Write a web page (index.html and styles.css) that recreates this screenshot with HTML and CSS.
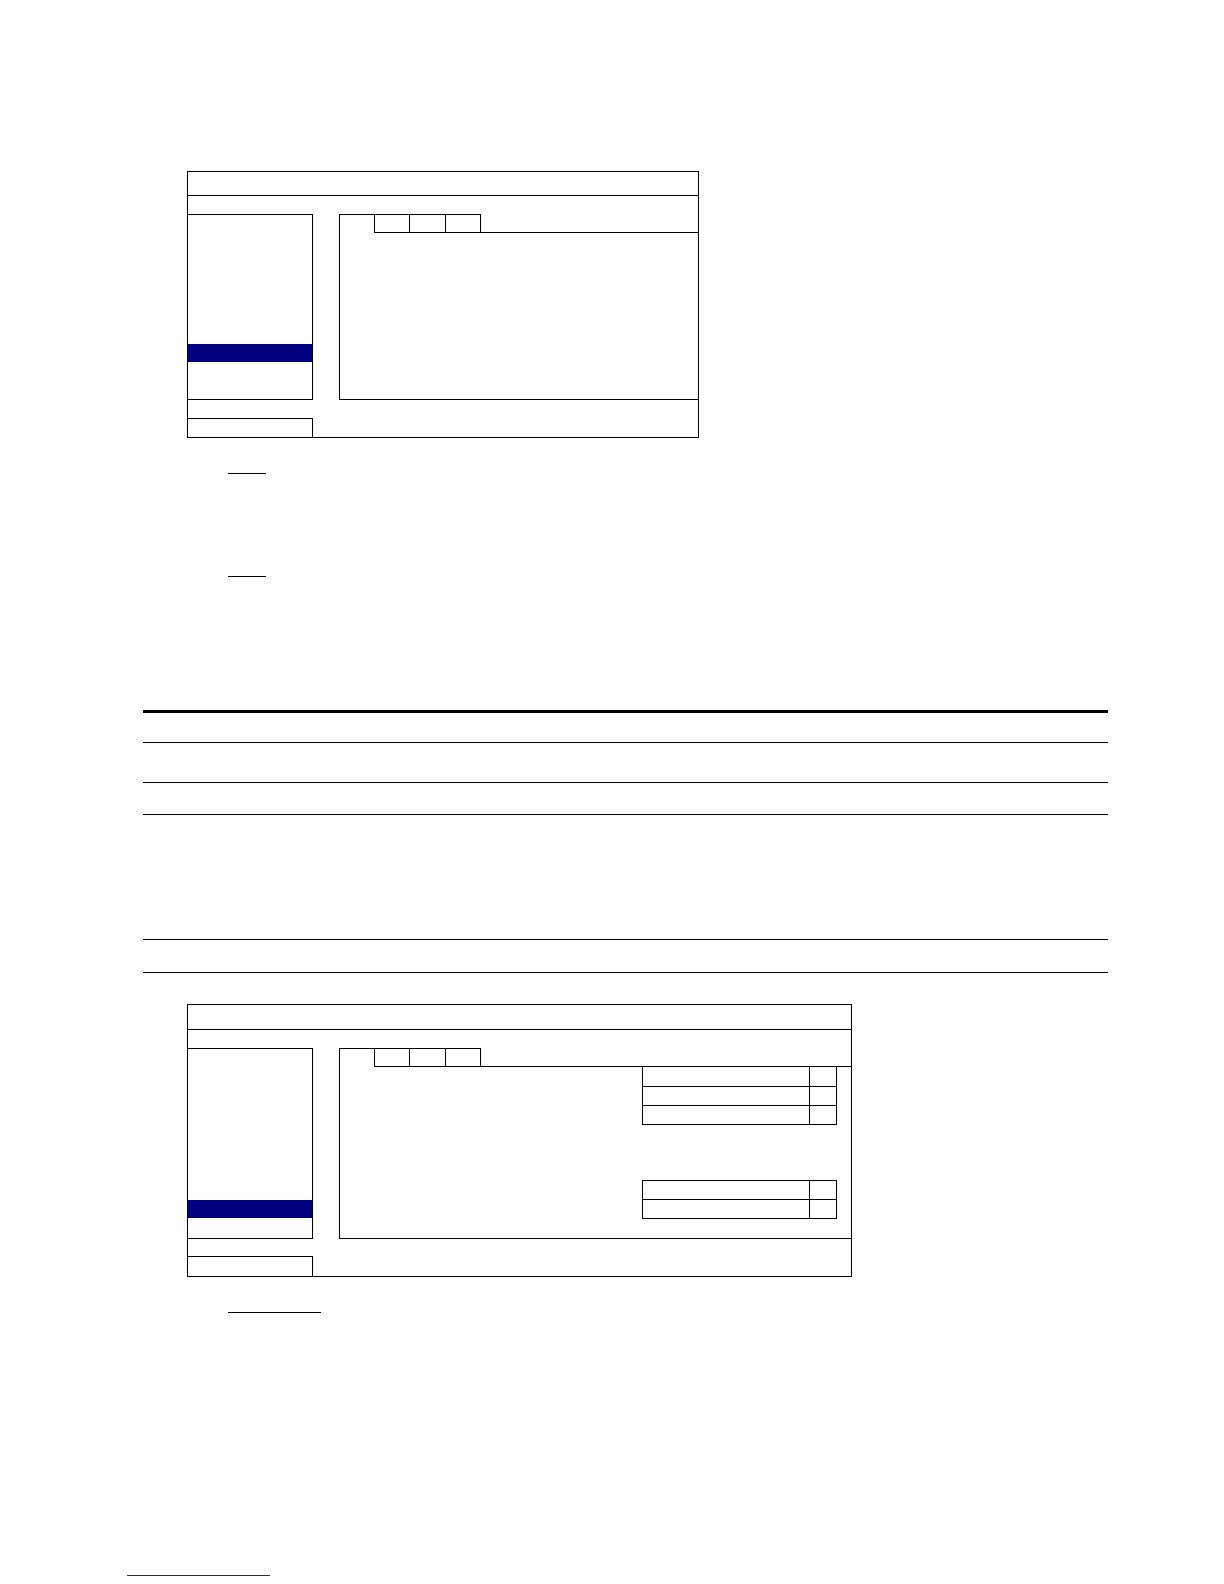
FILE: index.html
```html
<!DOCTYPE html>
<html lang="en">
<head>
<meta charset="utf-8">
<title>Menu layout</title>
<link rel="stylesheet" href="styles.css">
</head>
<body>
<div class="page">
  <div class="win win-a">
    <div class="win-head"></div>
    <div class="win-body">
      <div class="side"><div class="side-sel"></div></div>
      <div class="panel">
        <div class="tabs">
          <div class="tabs-lead"></div>
          <div class="tab tab-first"></div>
          <div class="tab tab-mid"></div>
          <div class="tab tab-last"></div>
          <div class="tabs-fill"></div>
        </div>
        <div class="panel-content"></div>
      </div>
    </div>
    <div class="win-foot"><div class="foot-box"></div></div>
  </div>

  <div class="uline uline-1"></div>
  <div class="uline uline-2"></div>

  <div class="rules rules-a">
    <div class="rules-row rr-1"></div>
    <div class="rules-row rr-2"></div>
    <div class="rules-row rr-3"></div>
  </div>
  <div class="rules rules-b">
    <div class="rules-row rr-4"></div>
  </div>

  <div class="win win-b">
    <div class="win-head"></div>
    <div class="win-body">
      <div class="side"><div class="side-sel"></div></div>
      <div class="panel">
        <div class="tabs">
          <div class="tabs-lead"></div>
          <div class="tab tab-first"></div>
          <div class="tab tab-mid"></div>
          <div class="tab tab-last"></div>
          <div class="tabs-fill"></div>
        </div>
        <div class="panel-content">
          <div class="grid-tbl grid-tbl-1">
            <div class="grid-row"><div class="cell-name"></div><div class="cell-val"></div></div>
            <div class="grid-row"><div class="cell-name"></div><div class="cell-val"></div></div>
            <div class="grid-row"><div class="cell-name"></div><div class="cell-val"></div></div>
          </div>
          <div class="grid-tbl grid-tbl-2">
            <div class="grid-row"><div class="cell-name"></div><div class="cell-val"></div></div>
            <div class="grid-row"><div class="cell-name"></div><div class="cell-val"></div></div>
          </div>
        </div>
      </div>
    </div>
    <div class="win-foot"><div class="foot-box"></div></div>
  </div>

  <div class="uline uline-3"></div>
  <div class="link-line"></div>
</div>
</body>
</html>
```

FILE: styles.css
```css
* { box-sizing: border-box; }
html, body {
  margin: 0;
  padding: 0;
  background: #ffffff;
  font-family: "Liberation Sans", Arial, sans-serif;
}
.page {
  width: 1224px;
  min-height: 1584px;
  overflow: hidden;
}

/* ---------- window mock-up ---------- */
.win {
  margin-left: 187px;
  border: 1px solid #000;
}
.win-a { margin-top: 171px; width: 512px; }
.win-b { margin-top: 31px; width: 665px; }

.win-head { border-bottom: 1px solid #000; }
.win-a .win-head { height: 24px; }
.win-b .win-head { height: 25px; }

.win-body {
  display: flex;
  padding-top: 18px;
}
.win-a .win-body > * { height: 186px; }
.win-b .win-body > * { height: 191px; }

.side {
  width: 125px;
  flex: none;
  border-top: 1px solid #000;
  border-right: 1px solid #000;
  border-bottom: 1px solid #000;
}
.side-sel {
  height: 18px;
  background: #000080;
}
.win-a .side-sel { margin-top: 129px; }
.win-b .side-sel { margin-top: 151px; }

.panel {
  flex: 1;
  margin-left: 26px;
  border-left: 1px solid #000;
  border-bottom: 1px solid #000;
  display: flex;
  flex-direction: column;
}
.tabs {
  display: flex;
  height: 19px;
  flex: none;
}
.tabs-lead {
  width: 34px;
  border-top: 1px solid #000;
}
.tab {
  border-top: 1px solid #000;
  border-bottom: 1px solid #000;
  border-right: 1px solid #000;
}
.tab-first { width: 36px; border-left: 1px solid #000; }
.tab-mid { width: 36px; }
.tab-last { width: 35px; }
.tabs-fill {
  flex: 1;
  border-bottom: 1px solid #000;
}
.panel-content {
  flex: 1;
  display: flex;
  flex-direction: column;
  align-items: flex-end;
  padding-right: 14px;
}

.win-foot { padding-top: 18px; }
.win-b .win-foot { padding-top: 17px; }
.foot-box {
  width: 125px;
  height: 19px;
  border-top: 1px solid #000;
  border-right: 1px solid #000;
}
.win-b .foot-box { height: 20px; }

/* ---------- small option tables ---------- */
.grid-tbl {
  width: 195px;
  border-left: 1px solid #000;
  border-right: 1px solid #000;
}
.grid-tbl-2 {
  margin-top: 55px;
  border-top: 1px solid #000;
}
.grid-row {
  display: grid;
  grid-template-columns: 167px 26px;
  height: 19px;
  border-bottom: 1px solid #000;
}
.grid-tbl-1 .grid-row:first-child { height: 20px; }
.cell-name { border-right: 1px solid #000; }

/* ---------- underlines ---------- */
.uline {
  margin-left: 228px;
  height: 1px;
  background: #000;
}
.uline-1 { margin-top: 35px; width: 38px; }
.uline-2 { margin-top: 102px; width: 38px; }
.uline-3 { margin-top: 35px; width: 93px; }

/* ---------- horizontal rule table ---------- */
.rules {
  margin-left: 143px;
  width: 965px;
}
.rules-a {
  margin-top: 133px;
  border-top: 3px solid #000;
}
.rules-b {
  margin-top: 124px;
  border-top: 1px solid #000;
}
.rules-row { border-bottom: 1px solid #000; }
.rr-1 { height: 30px; }
.rr-2 { height: 40px; }
.rr-3 { height: 32px; }
.rr-4 { height: 33px; }

/* ---------- footer link line ---------- */
.link-line {
  margin-top: 262px;
  margin-left: 127px;
  width: 143px;
  height: 1px;
  background: #2424aa;
}
```
